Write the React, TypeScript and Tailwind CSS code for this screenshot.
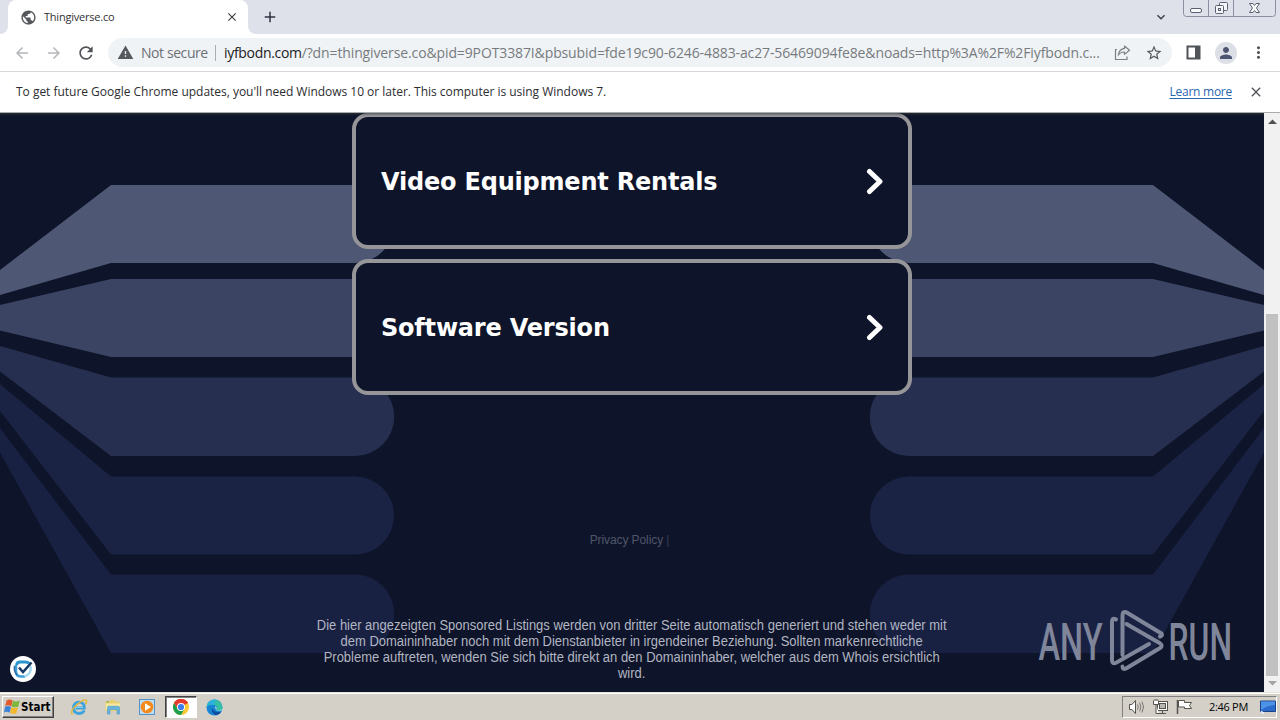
import {
  MdAdd,
  MdArrowBack,
  MdArrowForward,
  MdClose,
  MdExpandMore,
  MdMoreVert,
  MdPerson,
  MdPublic,
  MdRefresh,
  MdStarBorder,
  MdWarning,
} from 'react-icons/md';

function WindowControls() {
  return (
    <svg className="h-[18px] w-[94px]" viewBox="0 0 94 18" fill="none" stroke="#5a6070">
      <path d="M.5 -1V13.500Q.5 16.500 3.500 16.500H89.500Q92.500 16.500 92.500 13.500V-1M25.500 0V16M50.500 0V16" stroke="#8a90a0" />
      <rect x="7.500" y="8.500" width="11" height="4" rx="1.500" fill="#f8f9fb" />
      <rect x="36.500" y="2.500" width="8" height="8" rx="1" fill="#f4f5f8" />
      <rect x="32.500" y="5.500" width="8" height="8" rx="1" fill="#f4f5f8" />
      <rect x="35.500" y="8.500" width="2" height="2" />
      <path d="M66.500 3.500H70L71.500 5.500L73 3.500H76.500L73.500 8L76.500 12.500H73L71.500 10.500L70 12.500H66.500L69.500 8Z" fill="#f8f9fb" />
    </svg>
  );
}

function TabStrip() {
  return (
    <div className="flex h-[34px] shrink-0 bg-[#dee1e9]">
      <div className="flex w-2 bg-white">
        <div className="flex-1 rounded-br-lg bg-[#dee1e9]" />
      </div>
      <div className="flex bg-[#dee1e9]">
        <div className="flex w-[240px] items-center rounded-t-lg bg-white pr-[9px] pl-3">
          <MdPublic className="size-[17px] text-[#54575b]" />
          <span className="ml-[7px] flex-1 text-[11px] tracking-[-0.22px] text-[#303134]">Thingiverse.co</span>
          <MdClose className="size-[14px] text-[#3c4043]" />
        </div>
      </div>
      <div className="flex w-2 bg-white">
        <div className="flex-1 rounded-bl-lg bg-[#dee1e9]" />
      </div>
      <div className="flex items-center pl-[5px]">
        <MdAdd className="size-[18px] text-[#303340]" />
      </div>
      <div className="ml-auto flex">
        <MdExpandMore className="mt-[9px] mr-[14px] size-4 text-[#3a3d48]" />
        <WindowControls />
        <div className="w-[3px]" />
      </div>
    </div>
  );
}

function ShareIcon() {
  return (
    <svg className="size-[17px]" viewBox="0 0 17 17" fill="none" stroke="#7b7f84" strokeWidth="1.200" strokeLinejoin="round">
      <path d="M3 5.500H1.500V15.500H13V12.500" />
      <path d="M10.500 2L15.500 6.200L10.500 10.400V8C7.500 8 5.500 9 4.300 11.200C4.700 7.600 6.700 5 10.500 4.400Z" />
    </svg>
  );
}

function Toolbar() {
  return (
    <div className="flex h-[38px] shrink-0 items-center border-b border-[#d5d7da] bg-white pl-[13px]">
      <MdArrowBack className="size-[18px] text-[#b4b6ba]" />
      <MdArrowForward className="ml-[14px] size-[18px] text-[#b4b6ba]" />
      <MdRefresh className="ml-[13px] size-[20px] text-[#505357]" />
      <div className="ml-[12px] flex h-[29px] w-[1064px] items-center rounded-full bg-[#f0f3f5] pl-[9px]">
        <MdWarning className="size-[17px] text-[#55585c]" />
        <span className="ml-[7px] w-[74px] text-[14px] tracking-[-0.42px] whitespace-nowrap text-[#6c7075]">Not secure</span>
        <span className="h-4 w-px bg-[#a9adb1]" />
        <span className="ml-[8px] text-[14px] tracking-[-0.12px] whitespace-nowrap text-[#777b80]">
          <span className="tracking-[-0.32px] text-[#202124]">iyfbodn.com</span>
          /?dn=thingiverse.co&amp;pid=9POT3387I&amp;pbsubid=fde19c90-6246-4883-ac27-56469094fe8e&amp;noads=http%3A%2F%2Fiyfbodn.c...
        </span>
        <div className="mr-[9px] ml-auto flex items-center gap-[14px]">
          <ShareIcon />
          <MdStarBorder className="size-[18px] text-[#55585c]" />
        </div>
      </div>
      <svg className="ml-[14px] h-[15px] w-[15px]" viewBox="0 0 15 15">
        <path d="M.5 .5H14.500V14.500H.5ZM2.500 2.500V12.500H9V2.500Z" fill="#505357" fillRule="evenodd" />
      </svg>
      <div className="ml-[14px] flex size-[22px] items-center justify-center rounded-full bg-[#dcdfe6]">
        <MdPerson className="size-[18px] text-[#4c5571]" />
      </div>
      <MdMoreVert className="ml-[12px] size-[19px] text-[#505357]" />
    </div>
  );
}

function InfoBar() {
  return (
    <div className="flex h-[41px] shrink-0 items-center border-b border-[#a9abad] bg-white pr-[16px] pl-4 text-[12px] text-[#2c2d30]">
      <span className="tracking-[-0.02px] whitespace-nowrap">
        To get future Google Chrome updates, you'll need Windows 10 or later. This computer is using Windows 7.
      </span>
      <span className="ml-auto tracking-[-0.25px] text-[#2a66b0] underline underline-offset-2">Learn more</span>
      <MdClose className="ml-[16px] size-4 text-[#505357]" />
    </div>
  );
}

function Feathers() {
  return (
    <>
      <path fill="#4e5774" d="M0 270L111 185H355A39 39 0 0 1 355 263H111L0 295Z" />
      <path fill="#3c4464" d="M0 305L111 279H355A39 39 0 0 1 355 357H111L0 330.500Z" />
      <path fill="#272f50" d="M0 346L111 377.500H355A39.250 39.250 0 0 1 355 456H111L0 371.500Z" />
      <path fill="#1b2344" d="M0 384L111 476.500H355A39 39 0 0 1 355 554.500H111L0 411Z" />
      <path fill="#192142" d="M0 428L111 574.500H355A39.250 39.250 0 0 1 355 653H111L0 452.500Z" />
    </>
  );
}

function Backdrop() {
  return (
    <svg className="absolute inset-0 h-[579px] w-[1264px]" viewBox="0 113 1264 579">
      <Feathers />
      <g transform="translate(1264 0) scale(-1 1)">
        <Feathers />
      </g>
    </svg>
  );
}

function ListingCard({ title }: { title: string }) {
  return (
    <div className="flex h-[136px] w-[560px] items-center justify-between rounded-2xl border-4 border-[#969699] bg-[#0e1429] pr-[24px] pl-[25px]">
      <span className="pt-[2px] font-['DejaVu_Sans',sans-serif] text-[24px] font-bold tracking-[-0.2px] text-white">{title}</span>
      <svg className="h-[28px] w-[19px]" viewBox="0 0 19 28" fill="none" stroke="#fff" strokeWidth="5" strokeLinecap="round" strokeLinejoin="round">
        <path d="M4.500 4.500L15 14.500L4.500 24.500" />
      </svg>
    </div>
  );
}

function AnyRunLogo() {
  return (
    <svg className="absolute top-[492px] left-[1030px] h-[70px] w-[224px]" viewBox="1030 605 224 70" fill="#80869a">
      <g fontFamily="Roboto, sans-serif" fontSize="52" fontWeight="500">
        <text x="1038.500" y="659.500" textLength="64" lengthAdjust="spacingAndGlyphs">ANY</text>
        <text x="1168.500" y="659.500" textLength="63.500" lengthAdjust="spacingAndGlyphs">RUN</text>
      </g>
      <g fill="none" stroke="#80869a" strokeWidth="4" strokeLinejoin="round" strokeLinecap="round">
        <path d="M1116 619.500Q1112 617 1112 622V660Q1112 665 1116.500 662.500L1149 644" />
        <path d="M1122.500 655V616Q1122.500 610 1127.500 613L1161.500 633.500Q1163 635.500 1160 636.500" />
        <path d="M1126.500 624L1159.500 643Q1163.500 645.500 1160 648L1126 668.500Q1122.500 670 1122.500 666.500" />
      </g>
    </svg>
  );
}

function CheckBadge() {
  return (
    <div className="absolute top-[543px] left-[10px] flex size-[26px] items-center justify-center rounded-full bg-white">
      <svg className="size-[22px]" viewBox="0 0 22 22" fill="none">
        <path d="M17 5.500Q16 4 13.500 4H8Q5 4 4.500 7" stroke="#2a95cf" strokeWidth="3" />
        <path d="M4 7V14Q4.500 18.500 9 18.500H13" stroke="#3f9fd8" strokeWidth="2.500" />
        <path d="M2.500 8Q1.500 13 5 17" stroke="#2b6ca4" strokeWidth="1.500" />
        <path d="M18.500 8Q20 16 12.500 18.500" stroke="#a8dcf5" strokeWidth="2.500" />
        <path d="M7 9.500L11 14L19.500 4.500" stroke="#153c66" strokeWidth="2.500" />
      </svg>
    </div>
  );
}

function Page() {
  return (
    <main className="relative flex w-[1264px] flex-col items-center overflow-hidden bg-[#0e1429]">
      <Backdrop />
      <div className="relative flex flex-col gap-[10px]">
        <ListingCard title="Video Equipment Rentals" />
        <ListingCard title="Software Version" />
      </div>
      <p className="relative mt-[137px] mr-[5px] font-['Liberation_Sans',sans-serif] text-[12px] leading-[16px] tracking-[-0.09px] text-[#50566a]">
        Privacy Policy <span className="text-[#373d52]">|</span>
      </p>
      <p className="relative mt-[69px] scale-x-[0.927] text-center font-['Liberation_Sans',sans-serif] text-[14px] leading-[16px] whitespace-nowrap text-[#b2b6c2]">
        Die hier angezeigten Sponsored Listings werden von dritter Seite automatisch generiert und stehen weder mit
        <br />
        dem Domaininhaber noch mit dem Dienstanbieter in irgendeiner Beziehung. Sollten markenrechtliche
        <br />
        Probleme auftreten, wenden Sie sich bitte direkt an den Domaininhaber, welcher aus dem Whois ersichtlich
        <br />
        wird.
      </p>
      <AnyRunLogo />
      <CheckBadge />
      <div className="absolute inset-x-0 top-0 h-[3px] bg-linear-to-b from-[#303c3c]/60 to-transparent" />
    </main>
  );
}

function Scrollbar() {
  return (
    <div className="flex w-4 flex-col items-center bg-[#f1f1f1]">
      <svg className="mt-[6px] h-[5px] w-[9px]" viewBox="0 0 9 5">
        <path d="M0 5L4.500 .5L9 5Z" fill="#505050" />
      </svg>
      <div className="mt-[190px] h-[362px] w-3 bg-[#c1c1c1]" />
      <svg className="mt-[5px] h-[5px] w-[9px]" viewBox="0 0 9 5">
        <path d="M0 0L4.500 4.500L9 0Z" fill="#a3a3a3" />
      </svg>
    </div>
  );
}

function StartButton() {
  return (
    <div className="flex h-[22px] w-[52px] items-center border border-t-white border-r-[#404040] border-b-[#404040] border-l-white bg-[#d4d0c8] pl-px shadow-[inset_-1px_-1px_0_#808080]">
      <svg className="mb-[2px] h-[15px] w-4 shrink-0" viewBox="0 0 16.500 14.500" preserveAspectRatio="none">
        <path d="M2.800 1.200Q6 -.2 9 1.500L7.500 7.200Q4.500 5.300 1.300 6.800Z" fill="#e2592b" />
        <path d="M9.300 1.700Q12 3.200 16.300 1.500L14.700 7.400Q11 8.800 7.900 7.200Z" fill="#7db83c" />
        <path d="M1.200 7.200Q4.500 6 7.300 7.700L5.800 13.300Q3 11.700 0 13Z" fill="#3e83d6" />
        <path d="M7.700 7.900Q10.500 9.500 14.400 8.200L12.800 13.700Q9.500 14.800 6.200 13.500Z" fill="#f3b92b" />
      </svg>
      <span className="mt-px ml-px font-['DejaVu_Sans_Condensed','DejaVu_Sans',sans-serif] text-[11.5px] font-bold text-black">Start</span>
    </div>
  );
}

function ExplorerE() {
  return (
    <svg className="size-[18px]" viewBox="0 0 18 18" fill="none">
      <path d="M14.500 12.500Q12.500 15.500 9 15.500Q3.500 15 3.500 9.700Q3.800 4.500 9 4.200Q14.500 4.500 14.300 10H5.500" stroke="#3fa3dc" strokeWidth="2.800" />
      <path d="M5 9.300H13" stroke="#8ed4f4" strokeWidth="1" />
      <path d="M2.500 16.500Q-.5 13.500 6 7.500Q13 1 16 2.200Q17.500 3 15.500 6.500" stroke="#e3b83a" strokeWidth="1.500" />
    </svg>
  );
}

function FolderIcon() {
  return (
    <svg className="size-[18px]" viewBox="0 0 18 18">
      <path d="M1.500 3H6L7 1.800H10L11 3.500H15.500V13H1.500Z" fill="#e8cf6c" />
      <path d="M2 5.500H16V12H2Z" fill="#f8e9a1" />
      <path d="M2.500 3.800H5" stroke="#65a965" />
      <path d="M3.500 16V9.500Q3.500 8.200 5 8.200H14Q15.500 8.200 15.500 9.500V16H13V11.500H6V16Z" fill="#68b5df" stroke="#4a94c4" strokeWidth=".6" />
    </svg>
  );
}

function MediaIcon() {
  return (
    <svg className="size-[18px]" viewBox="0 0 18 18">
      <rect x="1.500" y="1.500" width="15" height="15" fill="#bfdcf2" stroke="#5292cb" />
      <circle cx="9" cy="9" r="6.300" fill="#f28a1c" />
      <path d="M7 5.300L13 9L7 12.700Z" fill="#fff" />
    </svg>
  );
}

function ChromeIcon() {
  return (
    <svg className="size-4" viewBox="0 0 16 16">
      <circle cx="8" cy="8" r="8" fill="#fcc934" />
      <path d="M8 8L1.070 4A8 8 0 0 1 14.930 4Z" fill="#e33b2e" />
      <path d="M8 4H14.930A8 8 0 0 0 1.070 4L4.540 10Z" fill="#e33b2e" />
      <path d="M1.070 4L4.540 10L8 12L8 16A8 8 0 0 1 1.070 4Z" fill="#1e9e4f" />
      <path d="M8 16L11.460 10L8 8L4.540 10Q6 12 8 12Z" fill="#1e9e4f" />
      <circle cx="8" cy="8" r="4" fill="#fff" />
      <circle cx="8" cy="8" r="3.100" fill="#3b7ded" />
    </svg>
  );
}

function EdgeIcon() {
  return (
    <svg className="size-[17px]" viewBox="0 0 17 17">
      <circle cx="8.500" cy="8.500" r="8" fill="#1686d4" />
      <path d="M.6 7.500A8 8 0 0 1 16.500 8.200Q16.500 11.500 13 11.600Q9.500 11.500 10.500 9.800Q12 7 8 5.800Q3.500 5 .6 7.500Z" fill="#36c0a2" />
      <path d="M.6 7.500A8 8 0 0 1 11 .9Q8 1.500 9 5.800Q4 4.500 .6 7.500Z" fill="#2eb4dc" />
      <path d="M6.200 8.500Q4.500 14.500 10 16.200Q14 15.500 15.500 12.500Q8 14.500 6.200 8.500Z" fill="#114f9e" />
      <path d="M9.500 7Q8.500 9.500 10.500 11.300Q12.500 12.600 16.500 11L17 8.500Q16.500 11.500 13 11.600Q9.500 11.500 10.500 9.800Q11 8.500 9.500 7Z" fill="#d4e4e8" />
    </svg>
  );
}

function TrayIcons() {
  return (
    <svg className="h-[18px] w-[68px]" viewBox="0 0 68 18" fill="none" stroke="#55534e">
      <path d="M1.500 6.500H4L7.500 2.500V15.500L4 11.500H1.500Z" fill="#fff" />
      <path d="M9.500 6.500Q11 9 9.500 11.500M11.700 4.800Q14 9 11.700 13.200M14 3.500Q17 9 14 14.500" stroke="#77756f" />
      <rect x="29.500" y="3.500" width="10" height="9" fill="#fff" />
      <rect x="31.500" y="5.500" width="6" height="5" fill="#b9b7b0" />
      <path d="M30 15.500H38M34.500 13V15" />
      <path d="M25.500 2.500V6.500H30.500V2.500M28 6.500V15.500H31M27 1V3M29 1V3" fill="#fff" />
      <path d="M49.500 2V16" strokeWidth="1.500" />
      <path d="M50.500 2.500H56.500V4.500H63.500L61.500 7.500L63.500 10.500H56.500V9H50.500Z" fill="#fff" />
    </svg>
  );
}

function Taskbar() {
  return (
    <footer className="flex h-[28px] shrink-0 items-center border-t border-[#e4e2dc] bg-[#d4d0c8] pt-px pr-[3px] pl-[2px] shadow-[inset_0_1px_0_#fff]">
      <StartButton />
      <div className="ml-4 flex gap-4">
        <ExplorerE />
        <FolderIcon />
        <MediaIcon />
      </div>
      <div className="ml-[9px] flex h-[22px] w-[32px] items-center justify-center border border-t-[#404040] border-r-white border-b-white border-l-[#404040] bg-white shadow-[inset_1px_1px_0_#808080]">
        <ChromeIcon />
      </div>
      <div className="ml-[9px]">
        <EdgeIcon />
      </div>
      <div className="ml-auto flex h-[22px] w-[155px] items-center border border-t-[#808080] border-r-white border-b-white border-l-[#808080] pl-[5px]">
        <TrayIcons />
        <span className="ml-[13px] w-[42px] text-[11px] tracking-[-0.3px] whitespace-nowrap text-black">2:46 PM</span>
        <svg className="ml-[9px] h-[14px] w-4" viewBox="0 0 16 14">
          <path d="M.5 1H15.500V11.500H.5Z" fill="#2a6bcc" stroke="#1a4286" />
          <path d="M1 1.500H15V5Q8 5 1 10Z" fill="#4d94e8" />
          <path d="M1 11.500L4 13.500" stroke="#e6effa" strokeWidth="2" />
        </svg>
      </div>
    </footer>
  );
}

export default function App() {
  return (
    <div className="flex h-[720px] w-[1280px] flex-col overflow-hidden font-['Open_Sans','Noto_Sans',sans-serif]">
      <TabStrip />
      <Toolbar />
      <InfoBar />
      <div className="flex h-[579px] shrink-0">
        <Page />
        <Scrollbar />
      </div>
      <Taskbar />
    </div>
  );
}
